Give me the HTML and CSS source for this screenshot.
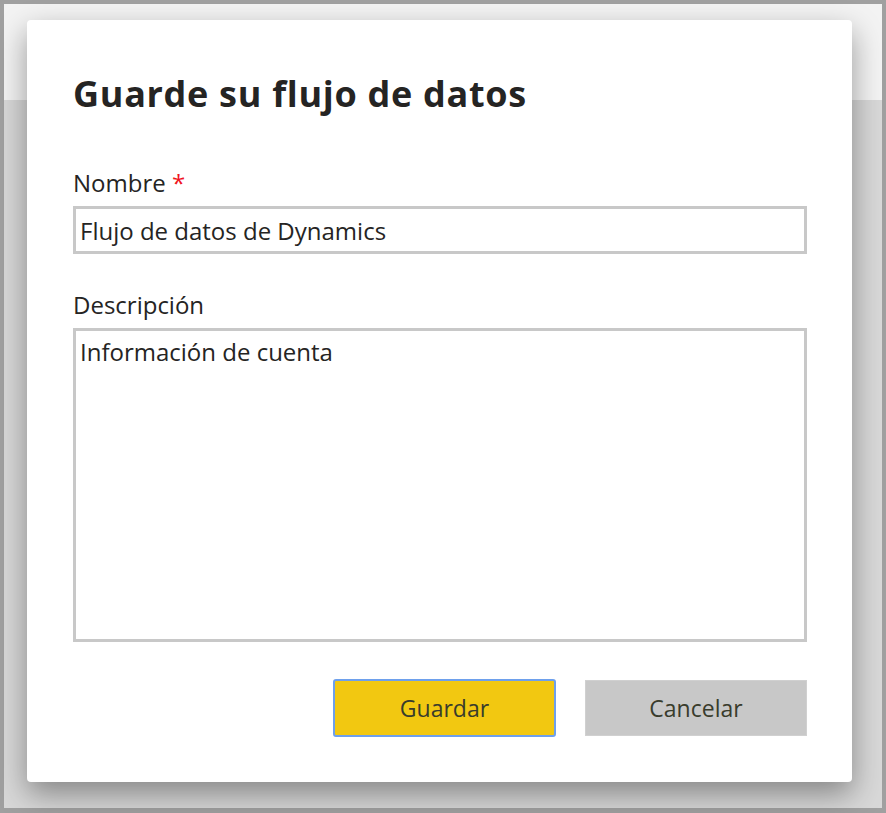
FILE: index.html
```html
<!DOCTYPE html>
<html lang="es">
<head>
<meta charset="utf-8">
<title>Guarde su flujo de datos</title>
<link rel="stylesheet" href="styles.css">
</head>
<body>
<div class="frame">
  <div class="page">
    <div class="page-top"></div>
    <div class="page-rest"></div>
  </div>
  <div class="dialog">
    <h1 class="title">Guarde su flujo de datos</h1>
    <div class="field field-name">
      <label class="label">Nombre <span class="req">*</span></label>
      <div class="input">Flujo de datos de Dynamics</div>
    </div>
    <div class="field field-desc">
      <label class="label">Descripción</label>
      <div class="textarea">Información de cuenta</div>
    </div>
    <div class="actions">
      <button class="btn btn-primary">Guardar</button>
      <button class="btn btn-secondary">Cancelar</button>
    </div>
  </div>
</div>
</body>
</html>
```
FILE: styles.css
```css
html, body {
  margin: 0;
  padding: 0;
  width: 886px;
  height: 813px;
  overflow: hidden;
}
body {
  font-family: "Open Sans", "Noto Sans", sans-serif;
  color: #252423;
}
.frame {
  position: relative;
  box-sizing: border-box;
  width: 886px;
  height: 813px;
  border: 4px solid #a0a0a0;
  border-bottom-width: 5px;
}
.page {
  display: flex;
  flex-direction: column;
  height: 100%;
}
.page-top {
  height: 96px;
  background: #f3f3f3;
}
.page-rest {
  flex: 1;
  background: #d8d8d8;
}
.dialog {
  position: absolute;
  left: 23px;
  top: 16px;
  width: 825px;
  height: 762px;
  box-sizing: border-box;
  background: #fff;
  border-radius: 4px;
  box-shadow: 0 12px 30px rgba(0,0,0,0.38);
  padding: 52px 45px 0 46px;
  display: flex;
  flex-direction: column;
}
.title {
  margin: 0;
  font-size: 36px;
  font-weight: 700;
  line-height: 44px;
  color: #252423;
  letter-spacing: 0.7px;
}
.field {
  display: flex;
  flex-direction: column;
}
.label {
  font-size: 24px;
  line-height: 32px;
  margin-bottom: 7px;
}
.field-name .label {
  margin-top: 51px;
}
.field-desc .label {
  margin-top: 35px;
}
.req {
  color: #f0141e;
}
.input {
  height: 48px;
  box-sizing: border-box;
  border: 3px solid #c8c8c8;
  padding: 2px 4px 0;
  font-size: 24px;
  line-height: 40px;
}
.textarea {
  height: 314px;
  box-sizing: border-box;
  border: 3px solid #c8c8c8;
  padding: 5px 4px 2px;
  font-size: 24px;
  line-height: 32px;
}
.actions {
  display: flex;
  justify-content: flex-end;
  align-items: flex-start;
  gap: 29px;
  margin-top: 37px;
}
.btn {
  font-family: inherit;
  font-size: 23px;
  color: #393c2c;
  box-sizing: border-box;
  padding: 0;
  cursor: pointer;
}
.btn-primary {
  width: 223px;
  height: 58px;
  background: #f2c811;
  border: 2px solid #6ea0ec;
  border-radius: 3px;
}
.btn-secondary {
  width: 222px;
  height: 56px;
  margin-top: 1px;
  background: #c8c8c8;
  border: 1px solid #d0d0d0;
}
```
